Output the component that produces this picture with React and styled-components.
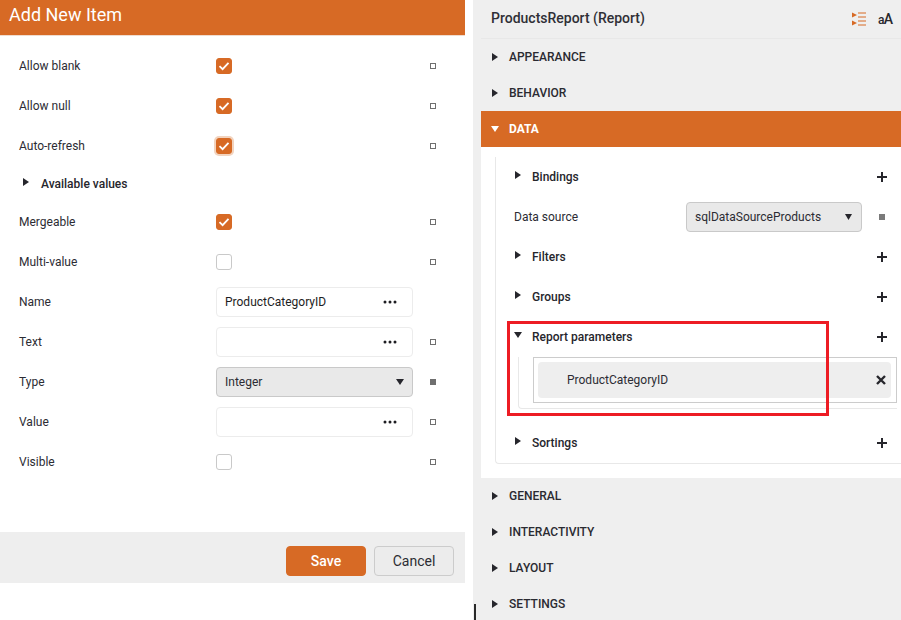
import React from "react";
import styled, { createGlobalStyle } from "styled-components";

const ORANGE = "#d76a25";
const INK = "#2c2c33";

const Global = createGlobalStyle`
  html, body { margin: 0; padding: 0; background: #fff; }
  body { font-family: Roboto, "Liberation Sans", sans-serif; font-size: 12px; color: ${INK}; overflow: hidden; }
  * { box-sizing: border-box; }
`;

const Page = styled.div`
  display: flex;
  width: 901px;
  height: 620px;
  overflow: hidden;
  position: relative;
`;

const Dialog = styled.div`
  width: 465px;
  flex: none;
  display: flex;
  flex-direction: column;
`;

const DialogTitle = styled.div`
  height: 36px;
  flex: none;
  background: ${ORANGE};
  border-bottom: 1px solid #f0dccf;
  color: #fff;
  font-size: 18px;
  line-height: 29px;
  padding-left: 9px;
`;

const Form = styled.div`
  height: 496px;
  flex: none;
  padding-top: 10px;
`;

const Row = styled.div`
  display: grid;
  grid-template-columns: 197px 197px 6px;
  column-gap: 0;
  align-items: center;
  height: 40px;
  padding-left: 19px;
`;

const Marker = styled.span`
  display: block;
  width: 6px;
  height: 6px;
  margin-left: 17px;
  border: 1px solid #6f6f6f;
  background: ${(p) => (p.$filled ? "#6f6f6f" : "transparent")};
`;

const Box = styled.span`
  display: flex;
  align-items: center;
  justify-content: center;
  width: 16px;
  height: 16px;
  border-radius: 3px;
  background: ${(p) => (p.$on ? ORANGE : "#fff")};
  border: 1px solid ${(p) => (p.$on ? ORANGE : "#c9c9c9")};
  box-shadow: ${(p) => (p.$focus ? "0 0 0 2px #f2d3be" : "none")};
`;

const Field = styled.div`
  display: flex;
  align-items: center;
  justify-content: space-between;
  height: 30px;
  width: 197px;
  padding-left: 8px;
  padding-right: 15px;
  border: 1px solid #ececec;
  border-radius: 4px;
  color: #1d1d22;
`;

const Dropdown = styled.div`
  display: flex;
  align-items: center;
  justify-content: space-between;
  height: 30px;
  width: ${(p) => p.$w}px;
  padding-left: 8px;
  padding-right: ${(p) => p.$pr}px;
  background: #e9e9e9;
  border: 1px solid #c9c9c9;
  border-radius: 4px;
`;

const SubHead = styled.div`
  display: flex;
  align-items: center;
  height: 36px;
  padding-left: 23px;
  font-weight: 500;
  color: #26262c;
  gap: 12px;
`;

const Footer = styled.div`
  height: 51px;
  flex: none;
  display: flex;
  justify-content: flex-end;
  align-items: center;
  gap: 8px;
  padding: 7px 11px 0 0;
  background: #eeeeee;
`;

const Button = styled.button`
  width: 80px;
  height: 30px;
  padding: 0;
  border-radius: 4px;
  font: ${(p) => (p.$primary ? 500 : 400)} 14px Roboto, sans-serif;
  color: ${(p) => (p.$primary ? "#fff" : INK)};
  background: ${(p) => (p.$primary ? ORANGE : "#ececec")};
  border: 1px solid ${(p) => (p.$primary ? ORANGE : "#cccccc")};
`;

const Panel = styled.div`
  width: 428px;
  flex: none;
  margin-left: 8px;
  padding-left: 8px;
  background: #efefef;
  display: flex;
  flex-direction: column;
`;

const PanelHead = styled.div`
  height: 39px;
  flex: none;
  display: flex;
  align-items: center;
  justify-content: space-between;
  padding: 0 9px 2px 10px;
  border-bottom: 1px solid #e8e8e8;
  font-size: 14px;
  font-weight: 500;
  color: #2f2f36;
`;

const HeadTools = styled.div`
  display: flex;
  align-items: center;
  gap: 12px;
  padding-top: 2px;
`;

const Aa = styled.span`
  width: 14px;
  white-space: nowrap;
  font-size: 12px;
  font-weight: 500;
  letter-spacing: -0.8px;
  color: #26262c;
  & > b { font-size: 14px; font-weight: 500; }
`;

const Section = styled.div`
  flex: none;
  height: 36px;
  display: flex;
  align-items: center;
  gap: ${(p) => (p.$open ? 10 : 11)}px;
  padding-left: ${(p) => (p.$open ? 10 : 11)}px;
  font-weight: ${(p) => (p.$open ? 700 : 500)};
  background: ${(p) => (p.$open ? ORANGE : "transparent")};
  color: ${(p) => (p.$open ? "#fff" : "#2a2a31")};
`;

const DataBody = styled.div`
  flex: none;
  background: #fff;
  padding: 10px 0 14px 14px;
`;

const Inner = styled.div`
  border-left: 1px solid #e8e8e8;
  border-bottom: 1px solid #e8e8e8;
  border-bottom-left-radius: 4px;
  position: relative;
`;

const Group = styled.div`
  display: flex;
  align-items: center;
  justify-content: space-between;
  height: 40px;
  padding: 0 14px 0 ${(p) => (p.$open ? 18 : 19)}px;
  color: #26262c;
  font-weight: 500;
`;

const GroupName = styled.span`
  display: flex;
  align-items: center;
  gap: ${(p) => (p.$open ? 10 : 11)}px;
`;

const SourceRow = styled.div`
  display: flex;
  align-items: center;
  height: 40px;
  padding-left: 18px;
  color: #2c2c33;
`;

const SourceLabel = styled.span`
  width: 172px;
`;

const SourceMark = styled.span`
  width: 6px;
  height: 6px;
  margin-left: 17px;
  background: #7a7a7a;
`;

const Params = styled.div`
  margin: 0 4px 14px 22px;
  height: 52px;
  border-left: 1px solid #e8e8e8;
  border-bottom: 1px solid #e8e8e8;
  border-bottom-left-radius: 4px;
  padding-left: 14px;
`;

const ParamList = styled.div`
  height: 46px;
  border: 1px solid #cccccc;
  padding: 4px 5px 4px 4px;
`;

const ParamItem = styled.div`
  display: flex;
  align-items: center;
  justify-content: space-between;
  height: 36px;
  padding: 0 5px 0 29px;
  background: #eeeeee;
  border-radius: 4px;
  color: #2c2c33;
  font-size: 12px;
`;

const Highlight = styled.div`
  position: absolute;
  left: 11px;
  top: 164px;
  width: 322px;
  height: 95px;
  border: 3px solid #ed1c24;
  pointer-events: none;
`;

const Tick = styled.div`
  position: absolute;
  left: 474px;
  top: 604px;
  width: 2px;
  height: 16px;
  background: #2a2a2a;
`;

const Check = () => (
  <svg width="12" height="10" viewBox="0 0 12 10" fill="none">
    <path d="M1.5 5.2 4.6 8.2 10.5 1.8" stroke="#fff" strokeWidth="1.8" />
  </svg>
);

const Dots = () => (
  <svg width="14" height="4" viewBox="0 0 14 4" fill="#1d1d22">
    <circle cx="2" cy="2" r="1.5" />
    <circle cx="7" cy="2" r="1.5" />
    <circle cx="12" cy="2" r="1.5" />
  </svg>
);

const ArrowDown = ({ color = "#26262c", lift, w = 8 }) => (
  <svg width={w} height="6" viewBox="0 0 8 6" preserveAspectRatio="none" fill={color} style={lift ? { marginTop: -4 } : undefined}>
    <path d="M0 0H8L4 6Z" />
  </svg>
);

const ArrowRight = ({ lift }) => (
  <svg width="6" height="8" viewBox="0 0 6 8" fill="#26262c" style={lift ? { marginTop: -4 } : undefined}>
    <path d="M0 0L6 4L0 8Z" />
  </svg>
);

const Plus = () => (
  <svg width="10" height="10" viewBox="0 0 10 10" stroke="#26262c" strokeWidth="2">
    <path d="M5 0V10M0 5H10" />
  </svg>
);

const Cross = () => (
  <svg width="10" height="10" viewBox="0 0 10 10" stroke="#26262c" strokeWidth="2.4">
    <path d="M1 1L9 9M9 1L1 9" />
  </svg>
);

const ListIcon = () => (
  <svg width="14" height="14" viewBox="0 0 14 14" fill="none" stroke={ORANGE} strokeWidth="1">
    <path d="M0 0.5L5 3L0 5.5ZM0 8.5L5 11L0 13.5Z" fill={ORANGE} stroke="none" />
    <path d="M6 1H14M6 5H14M6 9H14M6 13H14" />
  </svg>
);

const CheckRow = ({ label, on, focus, filled }) => (
  <Row>
    <span>{label}</span>
    <Box $on={on} $focus={focus}>{on && <Check />}</Box>
    <Marker $filled={filled} />
  </Row>
);

const InputRow = ({ label, value, noMark }) => (
  <Row>
    <span>{label}</span>
    <Field><span>{value}</span><Dots /></Field>
    {!noMark && <Marker />}
  </Row>
);

const GroupRow = ({ name, open }) => (
  <Group $open={open}>
    <GroupName $open={open}>
      {open ? <ArrowDown lift /> : <ArrowRight lift />}
      {name}
    </GroupName>
    <Plus />
  </Group>
);

export default function App() {
  return (
    <Page>
      <Global />
      <Dialog>
        <DialogTitle>Add New Item</DialogTitle>
        <Form>
          <CheckRow label="Allow blank" on />
          <CheckRow label="Allow null" on />
          <CheckRow label="Auto-refresh" on focus />
          <SubHead><ArrowRight lift />Available values</SubHead>
          <CheckRow label="Mergeable" on />
          <CheckRow label="Multi-value" />
          <InputRow label="Name" value="ProductCategoryID" noMark />
          <InputRow label="Text" />
          <Row>
            <span>Type</span>
            <Dropdown $w={197} $pr={8}><span>Integer</span><ArrowDown /></Dropdown>
            <Marker $filled />
          </Row>
          <InputRow label="Value" />
          <CheckRow label="Visible" />
        </Form>
        <Footer>
          <Button $primary>Save</Button>
          <Button>Cancel</Button>
        </Footer>
      </Dialog>
      <Panel>
        <PanelHead>
          ProductsReport (Report)
          <HeadTools>
            <ListIcon />
            <Aa>a<b>A</b></Aa>
          </HeadTools>
        </PanelHead>
        <Section><ArrowRight />APPEARANCE</Section>
        <Section><ArrowRight />BEHAVIOR</Section>
        <Section $open><ArrowDown color="#fff" />DATA</Section>
        <DataBody>
          <Inner>
            <GroupRow name="Bindings" />
            <SourceRow>
              <SourceLabel>Data source</SourceLabel>
              <Dropdown $w={176} $pr={9}><span>sqlDataSourceProducts</span><ArrowDown w={7} /></Dropdown>
              <SourceMark />
            </SourceRow>
            <GroupRow name="Filters" />
            <GroupRow name="Groups" />
            <GroupRow name="Report parameters" open />
            <Params>
              <ParamList>
                <ParamItem>ProductCategoryID<Cross /></ParamItem>
              </ParamList>
            </Params>
            <GroupRow name="Sortings" />
            <Highlight />
          </Inner>
        </DataBody>
        <Section><ArrowRight />GENERAL</Section>
        <Section><ArrowRight />INTERACTIVITY</Section>
        <Section><ArrowRight />LAYOUT</Section>
        <Section><ArrowRight />SETTINGS</Section>
      </Panel>
      <Tick />
    </Page>
  );
}
